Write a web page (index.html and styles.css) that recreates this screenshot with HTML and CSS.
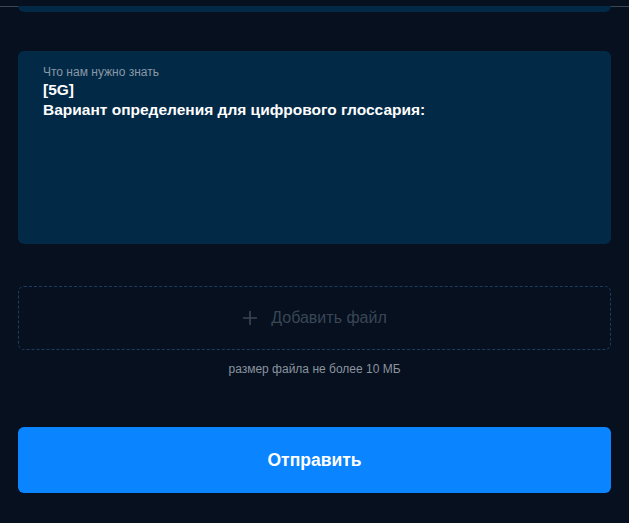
FILE: index.html
```html
<!DOCTYPE html>
<html lang="ru">
<head>
  <meta charset="UTF-8" />
  <meta name="viewport" content="width=device-width, initial-scale=1.0" />
  <title>Заявка</title>
  <link rel="stylesheet" href="styles.css">
</head>
<body>
  <div class="topbar"></div>
  <div class="page">
    <div class="card-tail"></div>

    <label class="field">
      <span class="field-label">Что нам нужно знать</span>
      <textarea class="field-input" rows="6">[5G]
Вариант определения для цифрового глоссария:</textarea>
    </label>

    <div class="dropzone">
      <svg class="plus" width="16" height="16" viewBox="0 0 16 16"><path d="M8 1v14M1 8h14" stroke="currentColor" stroke-width="1.6" fill="none"/></svg>
      <span>Добавить файл</span>
    </div>
    <div class="hint">размер файла не более 10 МБ</div>

    <button class="submit">Отправить</button>
  </div>
</body>
</html>
```

FILE: styles.css
```css
body {
  margin: 0;
  background: #06101f;
  font-family: "Liberation Sans", Arial, sans-serif;
  color: #fff;
}
.topbar {
  height: 6px;
  border-bottom: 1px solid #3a4756;
}
.page {
  padding: 0 18px;
}
.card-tail {
  height: 6px;
  margin-top: -1px;
  background: #022a47;
  border-radius: 0 0 6px 6px;
}
.field {
  display: block;
  margin-top: 39px;
  height: 193px;
  box-sizing: border-box;
  padding: 14px 25px;
  background: #022a47;
  border-radius: 6px;
}
.field-label {
  display: block;
  font-size: 12px;
  line-height: 15px;
  color: #8a97a5;
}
.field-input {
  display: block;
  width: 100%;
  margin-top: 0;
  padding: 0;
  border: none;
  outline: none;
  resize: none;
  background: transparent;
  color: #fff;
  font-family: inherit;
  font-size: 15.5px;
  font-weight: bold;
  line-height: 20px;
}
.dropzone {
  margin-top: 42px;
  height: 64px;
  box-sizing: border-box;
  border: 1px dashed #1f3c5e;
  border-radius: 6px;
  display: flex;
  align-items: center;
  justify-content: center;
  gap: 13px;
  color: #3a4656;
  font-size: 16px;
}
.plus {
  display: block;
}
.hint {
  margin-top: 11px;
  text-align: center;
  font-size: 12px;
  line-height: 16px;
  color: #8a939e;
}
.submit {
  display: block;
  width: 100%;
  margin-top: 50px;
  height: 66px;
  border: none;
  border-radius: 6px;
  background: #0a84ff;
  color: #fff;
  font-family: inherit;
  font-size: 17.5px;
  font-weight: bold;
  cursor: pointer;
}
```
